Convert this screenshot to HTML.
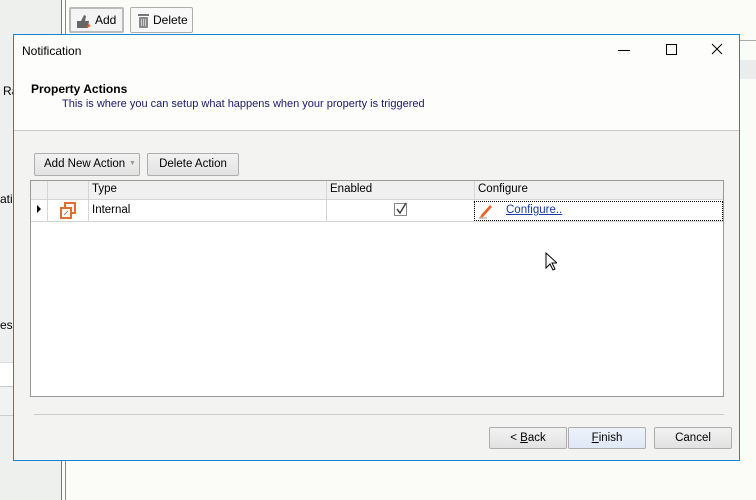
<!DOCTYPE html>
<html><head><style>
*{box-sizing:border-box;margin:0;padding:0}
body{width:756px;height:500px;position:relative;overflow:hidden;background:#fbfbf8;font-family:"Liberation Sans",sans-serif;font-size:12px;color:#000}
.a{position:absolute}
.btn{position:absolute;border:1px solid #adadad;border-radius:2px;background:linear-gradient(#f2f2f2,#e2e2e2);text-align:center;line-height:20px;font-size:12px;white-space:nowrap}
</style></head><body>
<div class="a" style="left:0;top:0;width:61px;height:500px;background:#eef0ee"></div>
<div class="a" style="left:61px;top:0;width:1px;height:500px;background:#777"></div>
<div class="a" style="left:65px;top:0;width:1px;height:500px;background:#888"></div>
<div class="a" style="left:3px;top:84px;font-size:12px">Ra</div>
<div class="a" style="left:0;top:192px">ati</div>
<div class="a" style="left:0;top:318px">es</div>
<div class="a" style="left:0;top:362px;width:13px;height:25px;background:#fff;border-top:1px solid #ddd;border-bottom:1px solid #ccc"></div>
<div class="a" style="left:0;top:388px;width:13px;height:28px;background:#f2f2f2;border-bottom:1px solid #ccc"></div>
<div class="a" style="left:740px;top:40px;width:16px;height:1px;background:#aaa"></div>
<div class="a" style="left:740px;top:60px;width:16px;height:19px;background:#ececec"></div>
<div class="btn" style="left:69px;top:7px;width:55px;height:26px;border:2px solid #bbb;background:#f4f4f4;line-height:22px;text-align:left;padding-left:24px">Add</div>
<svg class="a" style="left:74px;top:12px" width="18" height="18"><path d="M3 9h4l3-6 2 1-1 5h4l-1 7H3z" fill="#666"/><path d="M13 15l3-2" stroke="#e06020" stroke-width="2"/></svg>
<div class="btn" style="left:130px;top:7px;width:63px;height:26px;background:#f8f8f8;line-height:24px;text-align:left;padding-left:22px">Delete</div>
<svg class="a" style="left:137px;top:11px" width="13" height="18"><rect x="1" y="3" width="11" height="2" fill="#777"/><rect x="2" y="6" width="9" height="11" rx="1" fill="#888"/><path d="M4.5 8v7M6.5 8v7M8.5 8v7" stroke="#ccc"/></svg>

<div class="a" style="left:13px;top:34px;width:727px;height:427px;border:1px solid #1883d7;background:#f3f3f1">
 <div class="a" style="left:0;top:0;width:725px;height:96px;background:#fdfdfb;border-bottom:1px solid #c8c8c8"></div>
 <div class="a" style="left:8px;top:9px;font-size:12px">Notification</div>
 <div class="a" style="left:604px;top:15px;width:12px;height:1px;background:#000"></div>
 <div class="a" style="left:652px;top:9px;width:11px;height:11px;border:1px solid #000"></div>
 <svg class="a" style="left:697px;top:8px" width="12" height="12"><path d="M1 1l10 10M11 1L1 11" stroke="#000"/></svg>
 <div class="a" style="left:17px;top:47px;font-weight:bold;font-size:12px">Property Actions</div>
 <div class="a" style="left:48px;top:63px;font-size:11px;color:#1a1a6a">This is where you can setup what happens when your property is triggered</div>
 <div class="btn" style="left:20px;top:118px;width:106px;height:23px;text-align:left;padding-left:9px;font-size:11.5px">Add New Action<span class="a" style="left:94px;top:0;color:#999;font-size:7px">▼</span></div>
 <div class="btn" style="left:133px;top:118px;width:92px;height:23px;font-size:11.5px">Delete Action</div>
 <div class="a" style="left:16px;top:145px;width:694px;height:217px;background:#fff;border:1px solid #999">
  <div class="a" style="left:0;top:0;width:692px;height:19px;background:#f0f0f0;border-bottom:1px solid #d5d5d5"></div>
  <div class="a" style="left:16px;top:0;width:1px;height:40px;background:#d5d5d5"></div>
  <div class="a" style="left:57px;top:0;width:1px;height:40px;background:#d5d5d5"></div>
  <div class="a" style="left:295px;top:0;width:1px;height:40px;background:#d5d5d5"></div>
  <div class="a" style="left:443px;top:0;width:1px;height:40px;background:#d5d5d5"></div>
  <div class="a" style="left:0;top:40px;width:692px;height:1px;background:#d5d5d5"></div>
  <div class="a" style="left:61px;top:2px;font-size:11.5px">Type</div>
  <div class="a" style="left:299px;top:2px;font-size:11.5px">Enabled</div>
  <div class="a" style="left:447px;top:2px;font-size:11.5px">Configure</div>
  <div class="a" style="left:6px;top:24px;width:0;height:0;border-left:4px solid #000;border-top:4px solid transparent;border-bottom:4px solid transparent"></div>
  <svg class="a" style="left:29px;top:21px" width="17" height="17"><rect x="5" y="1" width="10" height="10" fill="none" stroke="#e07030" stroke-width="2"/><rect x="1" y="6" width="10" height="10" fill="#fff" stroke="#e07030" stroke-width="2"/><path d="M4 13l4-4" stroke="#888"/></svg>
  <div class="a" style="left:61px;top:23px;font-size:11.5px">Internal</div>
  <svg class="a" style="left:363px;top:21px" width="14" height="14"><rect x="0.5" y="1.5" width="12" height="12" fill="#fff" stroke="#888"/><path d="M3 7l3 4 6-10" stroke="#444" stroke-width="1.5" fill="none"/></svg>
  <div class="a" style="left:443px;top:20px;width:249px;height:20px;border:1px dotted #000"></div>
  <svg class="a" style="left:447px;top:22px" width="16" height="16"><path d="M3 12l9-10 2 2-9 10-3 1z" fill="#e8662a"/><path d="M1 15h8" stroke="#999"/></svg>
  <div class="a" style="left:475px;top:23px;color:#1a3aa0;text-decoration:underline;font-size:11.5px">Configure..</div>
 </div>
 <div class="a" style="left:20px;top:379px;width:690px;height:1px;background:#ccc"></div>
 <div class="btn" style="left:475px;top:392px;width:78px;height:22px;font-size:11.5px"><span>&lt; <u>B</u>ack</span></div>
 <div class="btn" style="left:554px;top:392px;width:78px;height:22px;background:linear-gradient(#eef3fb,#dfe8f6);font-size:11.5px"><u>F</u>inish</div>
 <div class="btn" style="left:640px;top:392px;width:78px;height:22px;font-size:11.5px">Cancel</div>
</div>
<svg class="a" style="left:545px;top:252px" width="12" height="19"><path d="M1 1v15l4-4 3 6 2-1-3-6h5z" fill="#fff" stroke="#000"/></svg>
</body></html>
